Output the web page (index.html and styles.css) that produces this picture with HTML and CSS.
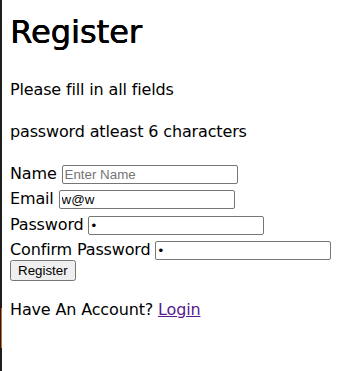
FILE: index.html
```html
<!DOCTYPE html>
<html>
<head>
<meta charset="utf-8">
<link rel="stylesheet" href="styles.css">
</head>
<body>
<h1 class="title">Register</h1>
<p class="note">Please fill in all fields</p>
<p class="note">password atleast 6 characters</p>
<form class="form">
<label class="lbl">Name <input class="field" type="text" placeholder="Enter Name"></label><br>
<label class="lbl">Email <input class="field" type="text" value="w@w"></label><br>
<label class="lbl">Password <input class="field" type="password" value="a"></label><br>
<label class="lbl">Confirm Password <input class="field" type="password" value="a"></label><br>
<button class="btn" type="button">Register</button>
</form>
<p class="note">Have An Account? <a class="link" href="#">Login</a></p>
</body>
</html>
```
FILE: styles.css
```css
html {
  border-left: 2px solid #1e1e1e;
  background: #fff;
  min-height: 100%;
  box-sizing: border-box;
}
html::after {
  content: "";
  position: fixed;
  left: 1px;
  top: 308px;
  width: 1px;
  height: 40px;
  background: #d2691e;
}
body {
  margin: 8px;
  font-family: "DejaVu Sans", sans-serif;
  font-size: 16px;
  line-height: 1.6;
  letter-spacing: -0.15px;
  color: #000;
}
.title {
  font-size: 32px;
  font-weight: normal;
  text-shadow: 0.6px 0 0 #000, 0.3px 0 0 #000;
  line-height: 1.5;
  letter-spacing: 0;
  margin: 0 0 0.67em;
}
.note {
  margin: 16px 0;
}
.form {
  margin: 0;
}
.field {
  font-family: "Liberation Sans", Arial, sans-serif;
  font-size: 13.333px;
  letter-spacing: 0;
  width: 176px;
  box-sizing: border-box;
  border: 1px solid #767676;
  border-radius: 2px;
  padding: 1px 2px;
  vertical-align: baseline;
}
.btn {
  display: block;
  margin: -3px 0 0;
  font-family: "Liberation Sans", Arial, sans-serif;
  font-size: 13.333px;
  letter-spacing: 0;
}
.link {
  color: #551a8b;
}
```
